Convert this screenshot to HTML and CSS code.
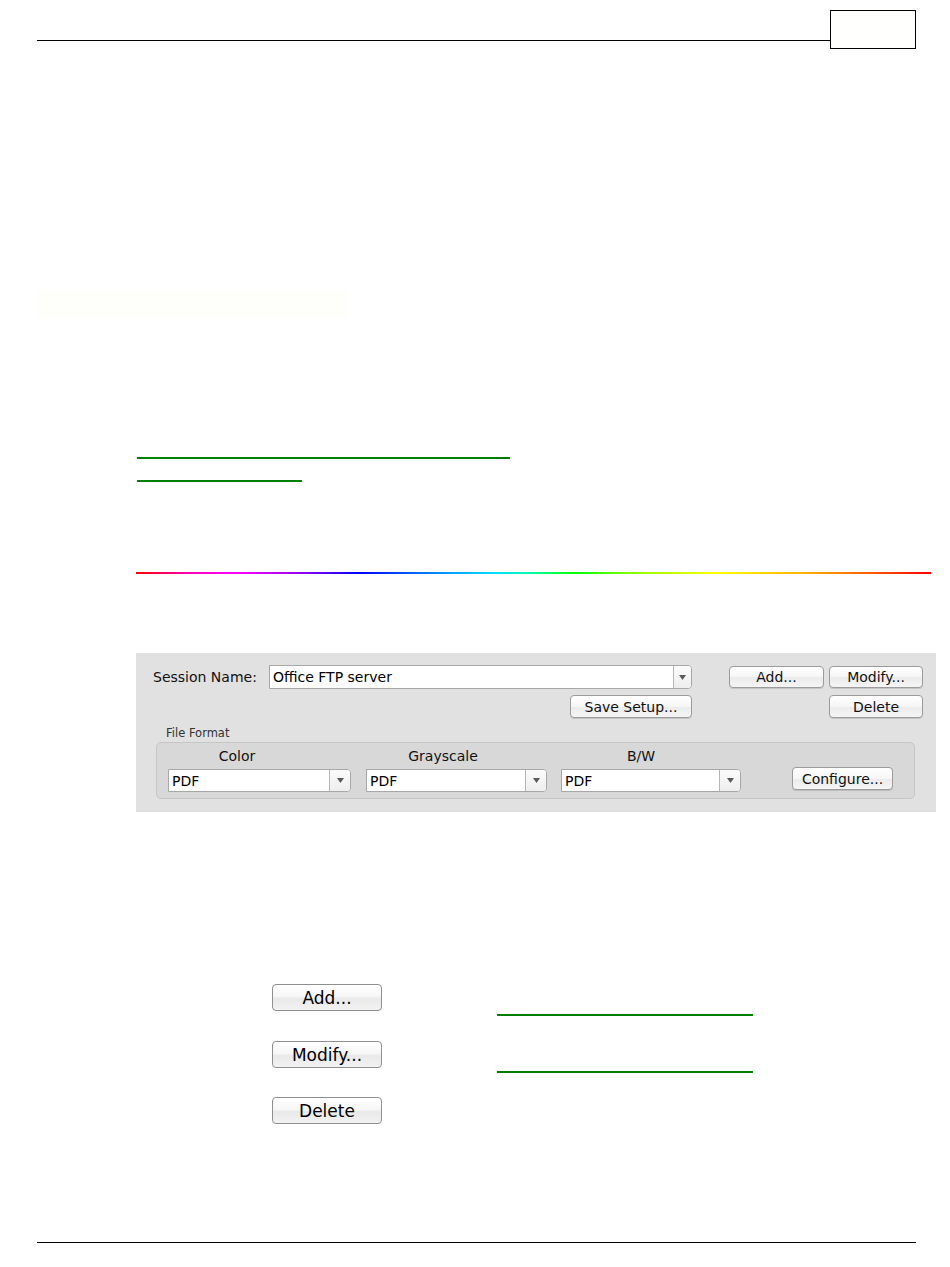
FILE: index.html
```html
<!DOCTYPE html>
<html lang="en">
<head>
<meta charset="utf-8">
<title>Session settings</title>
<link rel="stylesheet" href="styles.css">
</head>
<body>
<header class="page-header">
  <div class="header-rule"></div>
  <div class="page-box"></div>
</header>

<div class="faint-block"></div>

<div class="links">
  <span class="link-line link-long"></span>
  <span class="link-line link-short"></span>
</div>

<div class="rainbow"></div>

<section class="panel">
  <div class="panel-row row-top">
    <span class="label">Session Name:</span>
    <div class="combo">
      <span class="field">Office FTP server</span>
      <span class="arrow"><svg width="7" height="5" viewBox="0 0 7 5"><polygon points="0,0 7,0 3.5,5" fill="#5a5a5a"/></svg></span>
    </div>
    <button class="mac-btn btn-add">Add...</button>
    <button class="mac-btn btn-modify">Modify...</button>
  </div>
  <div class="panel-row row-second">
    <button class="mac-btn btn-save">Save Setup...</button>
    <button class="mac-btn btn-delete">Delete</button>
  </div>
  <div class="group-title">File Format</div>
  <div class="group-box">
    <div class="group-col col-color">
      <span class="col-label">Color</span>
      <div class="popup">
        <span class="field">PDF</span>
        <span class="arrow"><svg width="7" height="5" viewBox="0 0 7 5"><polygon points="0,0 7,0 3.5,5" fill="#5a5a5a"/></svg></span>
      </div>
    </div>
    <div class="group-col col-gray">
      <span class="col-label">Grayscale</span>
      <div class="popup">
        <span class="field">PDF</span>
        <span class="arrow"><svg width="7" height="5" viewBox="0 0 7 5"><polygon points="0,0 7,0 3.5,5" fill="#5a5a5a"/></svg></span>
      </div>
    </div>
    <div class="group-col col-bw">
      <span class="col-label">B/W</span>
      <div class="popup">
        <span class="field">PDF</span>
        <span class="arrow"><svg width="7" height="5" viewBox="0 0 7 5"><polygon points="0,0 7,0 3.5,5" fill="#5a5a5a"/></svg></span>
      </div>
    </div>
    <button class="mac-btn btn-configure">Configure...</button>
  </div>
</section>

<section class="actions">
  <div class="action-row">
    <button class="big-btn">Add...</button>
    <span class="link-line action-link"></span>
  </div>
  <div class="action-row">
    <button class="big-btn">Modify...</button>
    <span class="link-line action-link"></span>
  </div>
  <div class="action-row">
    <button class="big-btn">Delete</button>
  </div>
</section>

<footer class="page-footer"></footer>
</body>
</html>
```

FILE: styles.css
```css
* { box-sizing: border-box; }

body {
  margin: 0;
  background: #ffffff;
  font-family: "DejaVu Sans", "Liberation Sans", sans-serif;
  color: #000;
}

/* header */
.page-header {
  display: flex;
  align-items: flex-start;
  padding: 10px 34px 0 37px;
}
.header-rule {
  flex: 1;
  height: 31px;
  border-bottom: 1px solid #000;
}
.page-box {
  width: 86px;
  height: 39px;
  border: 1px solid #000;
  background: #fffffd;
}

.faint-block {
  margin: 241px 0 0 37px;
  width: 310px;
  height: 28px;
  background: #fefefb;
}

/* green link underlines */
.links {
  margin-left: 137px;
  display: flex;
  flex-direction: column;
  align-items: flex-start;
}
.link-line {
  display: block;
  height: 2px;
  background: #008000;
}
.link-long { width: 373px; margin-top: 139px; }
.link-short { width: 165px; margin-top: 21px; }

.rainbow {
  margin: 90px 0 0 136px;
  width: 795px;
  height: 2px;
  background: linear-gradient(to right,
    #ff0000 0%,
    #ff00aa 6%,
    #ff00ff 12%,
    #a000f0 20%,
    #0000ff 28%,
    #0080ff 37%,
    #00e0ff 45%,
    #00ffa0 50%,
    #00ff00 55%,
    #a0ff00 64%,
    #ffff00 73%,
    #ffb000 84%,
    #ff6000 92%,
    #ff0000 100%);
}

/* screenshot panel */
.panel {
  margin: 79px 0 0 136px;
  width: 800px;
  height: 159px;
  background: #e1e1e1;
  padding: 12px 0 0 17px;
  font-size: 14px;
}
.panel-row {
  display: flex;
  align-items: center;
}
.row-top { height: 24px; }
.row-second { height: 23px; margin-top: 6px; }

.label {
  width: 116px;
  color: #111;
  white-space: nowrap;
}

.combo, .popup {
  display: flex;
  background: #fff;
  border: 1px solid #a7a7a7;
  border-radius: 0 4px 4px 0;
}
.combo { width: 423px; height: 24px; }
.field {
  flex: 1;
  display: flex;
  align-items: center;
  padding-left: 3px;
  white-space: nowrap;
}
.arrow {
  display: flex;
  align-items: center;
  justify-content: center;
  border-left: 1px solid #b5b5b5;
  background: linear-gradient(#fbfbfb, #eeeeee);
  border-radius: 0 3px 3px 0;
}
.combo .arrow { width: 18px; }

.mac-btn {
  font-family: "DejaVu Sans", "Liberation Sans", sans-serif;
  font-size: 14px;
  color: #111;
  height: 23px;
  padding: 0;
  border: 1px solid #9b9b9b;
  border-radius: 4px;
  background: linear-gradient(#ffffff 0%, #f6f6f6 50%, #ebebeb 51%, #f5f5f5 100%);
  box-shadow: 0 1px 0 rgba(0,0,0,0.12);
  white-space: nowrap;
}
.btn-add { width: 95px; margin-left: 37px; height: 22px; }
.btn-modify { width: 94px; margin-left: 5px; height: 22px; }
.btn-save { width: 122px; margin-left: 417px; }
.btn-delete { width: 94px; margin-left: 137px; }

.group-title {
  margin: 8px 0 0 13px;
  font-size: 11.5px;
  line-height: 14px;
  color: #333;
}
.group-box {
  margin: 2px 0 0 3px;
  width: 759px;
  height: 57px;
  border: 1px solid #c6c6c6;
  border-radius: 5px;
  background: #d8d8d8;
  padding: 5px 0 0 11px;
  display: flex;
  align-items: flex-start;
}
.group-col {
  display: flex;
  flex-direction: column;
}
.col-label {
  text-align: center;
  line-height: 16px;
  margin-bottom: 5px;
  color: #111;
}
.popup { height: 23px; }
.popup .arrow { width: 21px; }

.col-color { width: 183px; }
.col-color .col-label { padding-right: 45px; }
.col-gray { width: 181px; margin-left: 15px; }
.col-gray .col-label { padding-right: 27px; }
.col-bw { width: 180px; margin-left: 14px; }
.col-bw .col-label { padding-right: 20px; }

.btn-configure {
  width: 101px;
  margin-left: 51px;
  margin-top: 19px;
}

/* action buttons */
.actions {
  margin: 172px 0 0 272px;
  display: grid;
  grid-template-rows: 57px 56px 27px;
}
.action-row {
  display: flex;
  align-items: flex-start;
}
.big-btn {
  width: 110px;
  height: 27px;
  padding: 0;
  font-family: "DejaVu Sans", "Liberation Sans", sans-serif;
  font-size: 17px;
  color: #000;
  border: 1px solid #8f8f8f;
  border-radius: 4px;
  background: linear-gradient(#ffffff 0%, #f7f7f7 45%, #e9e9e9 55%, #f2f2f2 100%);
}
.action-link {
  width: 256px;
  margin: 30px 0 0 115px;
}

.page-footer {
  margin: 118px 34px 0 37px;
  border-top: 1px solid #000;
}
```
